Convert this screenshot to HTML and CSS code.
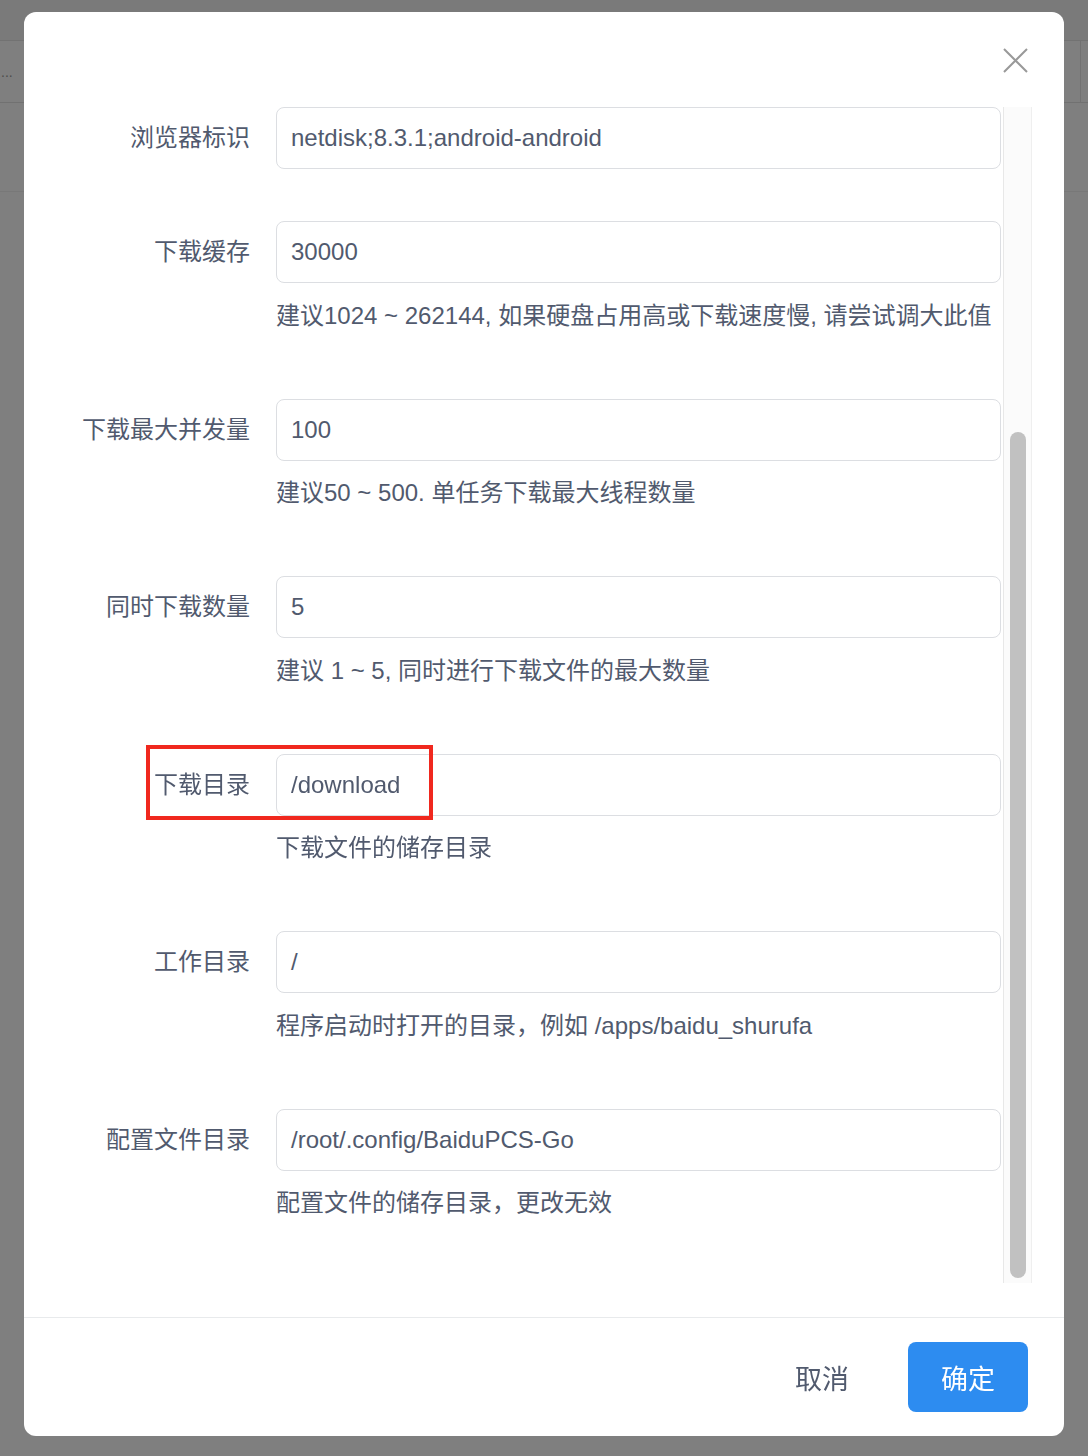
FILE: index.html
```html
<!DOCTYPE html>
<html>

<head>
    <title>设置</title>
    <link rel="stylesheet" href="styles.css">
</head>

<body>

    <!-- 底層頁面 -->
    <div class="page">
        <div class="topbar"></div>
        <div class="toolbar">
            <span class="more">...</span>
            <span class="tool-split"></span>
        </div>
        <div class="list-line"></div>
    </div>

    <!-- 遮罩 + 設置彈窗 -->
    <div class="mask">
        <div class="modal">
            <div class="modal-head">
                <span class="close-btn">
                    <svg width="25" height="25" viewBox="0 0 25 25">
                        <path d="M1 1 L24 24 M24 1 L1 24" stroke="#999" stroke-width="2" fill="none" />
                    </svg>
                </span>
            </div>

            <div class="modal-body">
                <div class="form">
                    <div class="form-item">
                        <label class="form-label">浏览器标识</label>
                        <div class="form-field">
                            <div class="input">netdisk;8.3.1;android-android</div>
                        </div>
                    </div>

                    <div class="form-item">
                        <label class="form-label">下载缓存</label>
                        <div class="form-field">
                            <div class="input">30000</div>
                            <div class="help">建议1024 ~ 262144, 如果硬盘占用高或下载速度慢, 请尝试调大此值</div>
                        </div>
                    </div>

                    <div class="form-item">
                        <label class="form-label">下载最大并发量</label>
                        <div class="form-field">
                            <div class="input">100</div>
                            <div class="help">建议50 ~ 500. 单任务下载最大线程数量</div>
                        </div>
                    </div>

                    <div class="form-item">
                        <label class="form-label">同时下载数量</label>
                        <div class="form-field">
                            <div class="input">5</div>
                            <div class="help">建议 1 ~ 5, 同时进行下载文件的最大数量</div>
                        </div>
                    </div>

                    <div class="form-item marked">
                        <label class="form-label">下载目录</label>
                        <div class="form-field">
                            <div class="input">/download</div>
                            <div class="help">下载文件的储存目录</div>
                        </div>
                        <!-- 紅框標示 -->
                        <div class="mark-box"></div>
                    </div>

                    <div class="form-item">
                        <label class="form-label">工作目录</label>
                        <div class="form-field">
                            <div class="input">/</div>
                            <div class="help">程序启动时打开的目录，例如 /apps/baidu_shurufa</div>
                        </div>
                    </div>

                    <div class="form-item">
                        <label class="form-label">配置文件目录</label>
                        <div class="form-field">
                            <div class="input">/root/.config/BaiduPCS-Go</div>
                            <div class="help">配置文件的储存目录，更改无效</div>
                        </div>
                    </div>
                </div>

                <div class="scrollbar">
                    <div class="scroll-thumb"></div>
                </div>
            </div>

            <div class="modal-foot">
                <button class="btn btn-text">取消</button>
                <button class="btn btn-primary">确定</button>
            </div>
        </div>
    </div>

</body>

</html>
```

FILE: styles.css
```css
body {
    margin: 0;
    font-family: "Liberation Sans", "Noto Sans CJK SC", sans-serif;
    color: #515a6e;
    background: #fff;
}

/* 底層頁面 */
.page {
    height: 1456px;
    overflow: hidden;
}

.topbar {
    height: 40px;
    background: #f4f4f4;
    border-bottom: 1px solid #e4e4e4;
}

.toolbar {
    height: 61px;
    border-bottom: 1px solid #e2e2e2;
    display: flex;
    align-items: center;
    justify-content: space-between;
}

.more {
    font-size: 14px;
    color: #999;
    margin-left: 1px;
}

.tool-split {
    width: 1px;
    height: 61px;
    background: #e4e4e4;
    margin-right: 7px;
}

.list-line {
    height: 1px;
    margin-top: 88px;
    background: #f0f0f0;
}

/* 遮罩 */
.mask {
    position: fixed;
    top: 0;
    left: 0;
    width: 100%;
    height: 100%;
    background: rgba(0, 0, 0, 0.5);
    padding: 12px 0 0 24px;
    box-sizing: border-box;
}

.modal {
    width: 1040px;
    height: 1424px;
    background: #fff;
    border-radius: 12px;
    display: flex;
    flex-direction: column;
}

.modal-head {
    height: 95px;
    box-sizing: border-box;
    padding: 36px 36px 0 0;
    display: flex;
    justify-content: flex-end;
    align-items: flex-start;
}

.close-btn {
    display: block;
    width: 25px;
    height: 25px;
    cursor: pointer;
}

.close-btn svg {
    display: block;
}

.modal-body {
    height: 1176px;
    padding: 0 32px 34px 32px;
    display: flex;
}

.form {
    flex: 1;
    overflow: hidden;
}

.form-item {
    display: flex;
    margin-bottom: 52px;
}

.form-item.marked {
    position: relative;
}

.form-label {
    width: 220px;
    flex-shrink: 0;
    box-sizing: border-box;
    padding-right: 26px;
    text-align: right;
    font-size: 24px;
    line-height: 62px;
    color: #515a6e;
    white-space: nowrap;
}

.form-field {
    flex: 1;
}

.input {
    height: 62px;
    box-sizing: border-box;
    border: 1px solid #dcdee2;
    border-radius: 8px;
    padding: 0 14px;
    font-size: 24px;
    line-height: 60px;
    color: #515a6e;
    background: #fff;
}

.help {
    font-size: 24px;
    line-height: 40px;
    padding: 12.5px 0 11px;
    color: #515a6e;
    white-space: nowrap;
}

/* 紅框 */
.mark-box {
    position: absolute;
    left: 90px;
    top: -9px;
    width: 287px;
    height: 75px;
    box-sizing: border-box;
    border: 4.5px solid #f0281e;
}

/* 捲軸 */
.scrollbar {
    width: 29px;
    margin-left: 2px;
    box-sizing: border-box;
    background: #fbfbfb;
    border-left: 1px solid #e8e8e8;
    border-right: 1px solid #efefef;
    display: flex;
    justify-content: center;
}

.scroll-thumb {
    width: 16px;
    height: 846px;
    margin-top: 325px;
    border-radius: 8px;
    background: #c1c1c1;
}

.modal-foot {
    border-top: 1px solid #e8eaec;
    padding: 24px 36px 24px 0;
    display: flex;
    justify-content: flex-end;
    gap: 26px;
}

.btn {
    height: 70px;
    width: 120px;
    border: none;
    border-radius: 8px;
    font-family: "Liberation Sans", "Noto Sans CJK SC", sans-serif;
    font-size: 27px;
    cursor: pointer;
}

.btn-text {
    background: transparent;
    color: #515a6e;
}

.btn-primary {
    background: #2d8cf0;
    color: #fff;
}
```
